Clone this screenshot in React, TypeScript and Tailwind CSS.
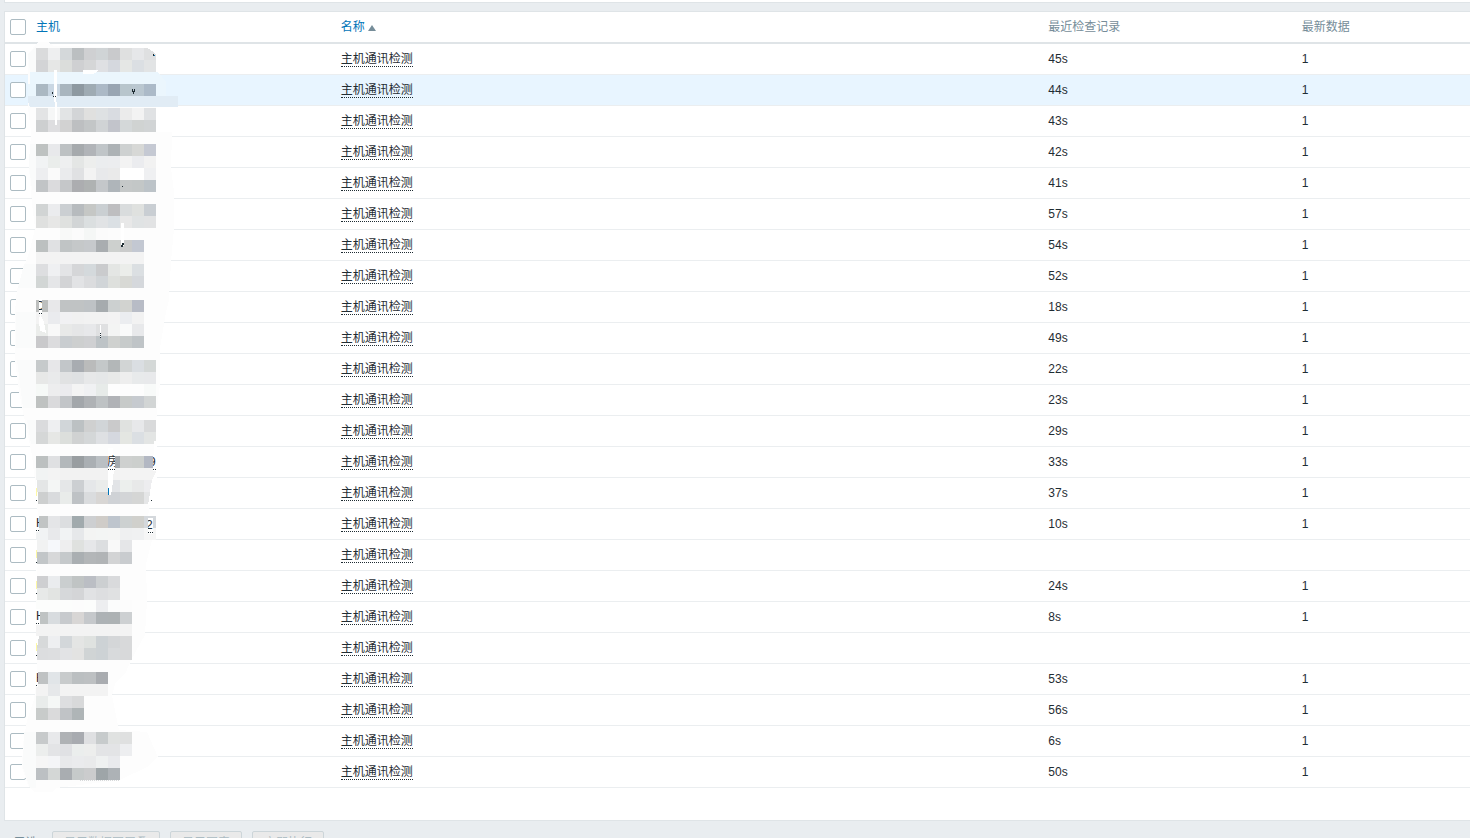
import React, { useState } from 'react';
import { clsx } from 'clsx';

interface Item {
  id: number;
  name: string;
  lastCheck: string;
  lastValue: string;
}

const checks = [
  '45s', '44s', '43s', '42s', '41s', '57s', '54s', '52s', '18s', '49s', '22s', '23s',
  '29s', '33s', '37s', '10s', '', '24s', '8s', '', '53s', '56s', '6s', '50s',
];

const items: Item[] = checks.map((lastCheck, id) => ({
  id,
  name: '主机通讯检测',
  lastCheck,
  lastValue: lastCheck ? '1' : '',
}));

const CELL = 12;

// Each line is one 12px band of the mosaic: top edge, then the cell colours from left to right
const mosaic: [number, string][] = [
  [48, 'dadbdc eeeff0 d4d8da bbbfc1 cfd0d2 d0d4d6 c9cacc dfe0e0 e6e7e9 dfe0e1'],
  [60, 'd3d4d6 e6e7e6 dbdddb cfd0d2 d5d6d7 dfe0e3 d5d8de e5e7e5 dbdfe3 e2e4e5'],
  [84, 'abb8c2 cad7e3 a9b5be 8e99a1 9fabb3 acb9c6 99a5b2 b8c5cc bac7d0 acbac8'],
  [108, 'e3e4e5 f6f7f7 e2e4e5 d3d5d7 e0e0df dee1e3 d9dce1 ebebeb f3f3f3 e0e2e4'],
  [120, 'cdcfd0 dedee0 d2d2d2 bdbfc1 c3c6c7 d0d3d5 c2c4cb d4d8d9 d0d3d2 d1d4d5'],
  [144, 'bec2c1 e8e9eb bdc1c3 a6aaad b1b4b8 c0c5c8 adb2b5 ced1d1 d7d8d6 c5c9d3'],
  [156, 'f1f3f4 eaedeb eeeff0 e4e6e5 edeeed ebedef ecedef f3f3f3 ebecef f2f2f2'],
  [168, 'edeef0 fafafa eaebed e0e1e3 f3f3f3 e8e9eb eaeaea ffffff ffffff eff0f2'],
  [180, 'c1c4c6 dbdbdd c5c7c9 acadb0 afb2b2 c4c7ca afb5ba c5c8c8 c3c7c7 bcc3c8'],
  [204, 'd1d4d4 ebecee cbcfd2 b7bbbe c5c7c5 cacfd2 bebec0 d9dcdd dfe1df c9ced3'],
  [216, 'dfe0df e7e7e6 dfe1df d2d5d6 dbdfe0 e1e3e5 dbe0e4 e8e8e8 e0e3e4 e2e3e4'],
  [228, 'fdfdfd fdfdfd f8f9f8 fbfbfb f5f7f6 fbfbfb fcfcfc fdfdfd fdfdfd'],
  [240, 'bcc0c0 e0e1e3 c0c4c5 c5c8c9 c6c9cc a9adb0 cdd0ce cacbcb c3c8d2'],
  [252, 'f3f3f3 f3f3f3 f3f3f3 f3f3f3 f3f3f3 f3f3f3 f3f3f3 f3f3f3 f3f3f3'],
  [264, 'dddee0 eff0f2 e3e4e6 d5d6d8 d4d9dc cacbcd e4e6e4 ebedea dbdfe2'],
  [276, 'd2d6d5 e5e6e8 d3d4d6 e2e3e5 dbdcde d1d5d8 dee0dd d8d9d5 d5d8dc'],
  [300, 'bdbfbe e8e8ea c0c3c4 c0c3c4 bec2c5 a6abae ccd0d0 d2d3d0 b8bcc6'],
  [312, 'f3f3f3 eaebee f1f1f3 f1f1f1 f2f2f2 f2f2f2 f3f3f3 ebedf0 f2f2f2'],
  [324, 'ebedeb f8f8f8 e8e9e8 e5e6e7 e7e8ea dfe0e1 f3f4f3 f9fafa e8e9eb'],
  [336, 'c9c9cb dcdcde c9cdd0 cdcfcf cfd0d2 bdc3c6 cfd1cf c7cbcb bfc4c7'],
  [360, 'c6cacb e7e7e9 c2c6c9 a8acb1 babbbb c4c8c9 b3b7b8 d2d5d5 dadee2 d4d8d7'],
  [372, 'e7e8e7 e9eaeb e1e2e3 dfe1e3 e7e8e9 e5e7e8 e8e9e8 eeeeee e8eaeb e8e9eb'],
  [384, 'f6f9f7 ededee ebebee f4f4f4 f0f1f3 e7ebe9 fdfdfd fdfdfd fdfdfd f8faf9'],
  [396, 'bfc2c1 dadadc c2c5c8 a3a7ab afb2b5 bec2c4 b0b2b6 c7cac9 c6cacf d2d5d5'],
  [420, 'dadbdd eeeff1 d1d6d9 bcc1c3 cfd0d0 d1d5d8 cacacb e0e2e0 e7e8ea d9dadb'],
  [432, 'd5d7d7 e6e7e5 dcdfdc d0d2d2 d4d7d8 dee0e3 d5d8df e4e6e2 dbdfe3 e3e5e4'],
  [456, 'bcc0c0 dfe0e2 b3b8bb 999ea1 aaafb3 babfc3 a5aaae ced0cf cccfcd b3b8c3'],
  [468, 'f1f3f3 f3f3f3 f2f2f2 f2f2f2 f2f2f2 f2f2f2 f3f3f3 f3f3f3 f3f3f3 f3f3f3'],
  [480, 'e4e6e6 f4f6f5 e5e7e8 cccfd2 e5e7e9 eaeceb e2e4e7 ecefed e8e9e9 ededef'],
  [492, 'cdcfcf d9dbdd e9ecea bec2c5 dadcde d8d6d4 cfd2d6 d3d5d7 d5d6d5 e5e6e7'],
  [516, 'c1c4c4 e4e5e7 dcdee0 a1aaad cdcfd1 cfccc8 bec5cd cdd1d1 d0d0cc d4d8dc'],
  [528, 'f1f3f4 e8e9eb f1f3f4 e6e8ea f3f4f3 f3f5f4 f4f5f4 eff0f1 f0f1f2 f6f6f6'],
  [540, 'f1f2f2 f6f8fb eeeeef dfe1df e6e7e9 dcdee0 f9f9f9 e5e6e8'],
  [552, 'c2c6c8 d7d8d9 c5c9cb aaafb2 b3b6b8 b1b4b6 d3d4d5 c9cccf'],
  [576, 'cecfd1 eaecee cacecf c0c4c4 bbbec4 cccfd1 d9dadc'],
  [588, 'e7e9e8 e2e4e2 d6d8da d4d5d7 e1e2e4 dddee0 e0e1e2'],
  [600, 'fcfdfc fcfdfc fcfdfc fcfcfc fcfdfc edeef0 fbfcfc fcfcfc'],
  [612, 'bfc3c3 d8dcdf c7cacd d8d6d5 c5c8cb adb2b5 adb2b4 cdd0d2'],
  [624, 'f3f3f3 f3f3f3 f3f3f3 f3f3f3 f3f3f3 f3f3f3 f3f3f3 f3f3f3'],
  [636, 'd7d9da eeeff1 d3d7da e4e5e4 dfe2e0 cdd2d5 d4d6d8 d8d9da'],
  [648, 'dcdddf dddee0 e2e3e5 e3e3e2 d0d4d5 cdd2d5 d8dadc d8d9da'],
  [672, 'bfc2c3 e1e5e8 c8cbcc bbbfc1 bdc0c2 a9acb0'],
  [684, 'f3f3f3 e6e8ea f3f3f3 f3f3f3 f3f3f3 f3f3f3'],
  [696, 'e9eceb f5f7f6 dddee0 d8d9da'],
  [708, 'c8cbca dadadb c0c3c6 afb5b7'],
  [732, 'c7cacb e8e9eb afb2b5 a8abb0 dfe0e2 c7cbcc e0e2e1 dfe0e0'],
  [744, 'eceeed e3e4e6 e0e1e4 ebeeed edeeed e3e4e6 e3e4e6 edeef0'],
  [756, 'f6f6f6 f4f5f7 e8e9eb eaebed e9eaeb eff1f1 e9eaed'],
  [768, 'bcc0c3 d4d7d6 a9adb1 c6caca cbcccd 9ea5a8 adb2b6'],
];

// Bits of the host names that stick out of the mosaic
const fragments = [
  { x: 36, y: 516, w: 3, text: 'H', dx: 0 },
  { x: 148, y: 518, w: 5, text: '2', dx: -2 },
  { x: 36, y: 609, w: 4, text: 'H', dx: 0 },
  { x: 36, y: 671, w: 2, text: 'H', dx: 0 },
  { x: 39, y: 299, w: 3, text: 'D', dx: -3 },
  { x: 108, y: 455, w: 7, text: '房', dx: -1 },
  { x: 153, y: 455, w: 3, text: '9', dx: -4 },
];

const yellowMarks = [488, 550, 581, 643];

function HostMosaic() {
  return (
    <svg
      className="absolute top-0 left-0 pointer-events-none"
      width="180"
      height="790"
      viewBox="5 12 180 790"
      shapeRendering="crispEdges"
      aria-hidden="true"
    >
      {/* brush strokes */}
      <path
        fill="#fdfdfd"
        d="M28 54 L38 42 H48 L54 46 L108 47 L150 49 L156 60 V132 H172 L171 168 L174 192 V228 L171 262 L169 300 L166 312 L164 324 L160 348 V384 L157 408 L155 444 L152 490 L148 516 L152 528 V540 L146 564 L147 600 L145 635 L131 660 L126 672 L115 684 L112 696 L117 720 L119 730 L147 732 L158 757 L147 767 L120 780 L56 788 L52 792 H34 L28 785 L22 768 L23 744 L27 720 L34 700 L37 672 V576 L39 540 L38 516 L36 490 L32 456 L27 430 L22 408 L18 384 L15 360 V312 L17 290 L23 270 L30 250 L35 228 L32 204 L29 168 L31 132 L28 108 Z"
      />
      <path fill="#fafbfb" d="M28 54 L36 46 V72 H30 Z M30 144 H36 V190 H32 L29 165 Z M24 264 H36 V288 H18 Z M16 312 H36 V348 H16 Z M17 360 H36 V408 H23 Z M27 420 H36 V444 H31 Z M24 732 H36 V788 H30 L23 768 Z" />
      <path fill="#ebf6fd" d="M30 72 H158 L166 82 V96 H28 V84 H30 Z" />
      <path fill="#e1ecf5" d="M28 96 H178 V107 H30 L28 102 Z" />

      {mosaic.map(([y, colors]) =>
        colors.split(' ').map((color, i) => (
          <rect key={`${y}-${i}`} x={36 + i * CELL} y={y} width={CELL} height={CELL} fill={`#${color}`} />
        ))
      )}

      {/* gaps between the strokes */}
      <path
        fill="#ffffff"
        d="M54 70 H57 V97 H56 L57 107 V125 H55 V108 L54 96 Z M83 70 H98 L96 73 L92 74 H83 Z M121 223 H124 V246 H121 Z M40 314 L44 322 L46 333 L40 331 L39 320 Z M100 325 H101 V338 H100 Z M108 448 H113 L114 469 L112 490 L111 495 H108 Z M146 47 H157 V56 L152 51 Z M154 441 H157 V455 H154 Z M152 480 L157 470 V505 H148 Z M36 480 H37 L38 504 H36 Z M36 540 H37 V600 H36 Z M36 636 H39 L37 648 V662 H36 Z"
      />

      {fragments.map(({ x, y, w, text, dx }) => (
        <svg key={`${x}-${y}`} x={x} y={y} width={w} height="16">
          <rect width={w} height="16" fill="#ffffff" />
          <text x={dx} y="11" fontSize="12" fill="#1f2c33">{text}</text>
          <line x1="0" y1="14.5" x2={w} y2="14.5" stroke="#1f2c33" strokeDasharray="1 1" />
        </svg>
      ))}
      {yellowMarks.map((y) => (
        <g key={y}>
          <rect x="36" y={y} width="1" height="8" fill="#fdf8a4" />
          <rect x="36" y={y + 12} width="1" height="1" fill="#1f2c33" />
        </g>
      ))}
      <path fill="#1f2c33" d="M52 92 H53 V94 H52 Z M53 96 H54 V97 H53 Z M55 96 H56 V97 H55 Z M132 89 H133 V91 H134 V94 H133 V92 H132 Z M134 89 H135 V92 H134 Z M153 54 H154 V55 H155 V56 H153 Z M122 186 H123 V187 H122 Z M122 243 H124 V245 H123 V247 H121 V245 H122 Z M100 333 H101 V334 H100 Z M100 335 H101 V336 H100 Z M100 337 H101 V338 H100 Z M151 500 H152 V501 H151 Z" />
      <path fill="#0275b8" d="M108 488 H109 V495 H108 Z M154 55 H155 V56 H154 Z" />
      <line x1="80" y1="780.5" x2="120" y2="780.5" stroke="#d8dadb" strokeDasharray="1 1" />
    </svg>
  );
}

interface CheckboxProps {
  label: string;
  checked: boolean;
  onChange: () => void;
}

function Checkbox({ label, checked, onChange }: CheckboxProps) {
  return (
    <input
      type="checkbox"
      aria-label={label}
      checked={checked}
      onChange={onChange}
      className="block w-4 h-4 appearance-none rounded-xs border border-[#acbbc2] bg-white checked:bg-[#0275b8]"
    />
  );
}

export default function App() {
  const [selected, setSelected] = useState<number[]>([]);
  const allSelected = selected.length === items.length;

  const toggle = (id: number) =>
    setSelected(selected.includes(id) ? selected.filter((s) => s !== id) : [...selected, id]);

  return (
    <div className="h-screen overflow-hidden bg-[#e9edf0] pl-1 text-xs text-[#1f2c33] font-['Liberation_Sans','Noto_Sans_CJK_SC',sans-serif]">
      {/* Bottom edge of the filter panel */}
      <div className="h-[3px] bg-white border-l border-b border-[#dfe4e7]" />

      <main className="relative mt-2 bg-white border-l border-y border-[#dfe4e7] pb-8">
        <div className="relative">
          <table className="w-full table-fixed border-separate border-spacing-0 text-left">
            <thead>
              <tr className="h-8 [&>th]:border-b-2 [&>th]:border-[#dfe4e7] [&>th]:font-normal [&>th]:px-[5px] [&>th]:py-0">
                <th className="w-[26px]">
                  <Checkbox
                    label="全选"
                    checked={allSelected}
                    onChange={() => setSelected(allSelected ? [] : items.map((i) => i.id))}
                  />
                </th>
                <th className="w-[20.8%]">
                  <a href="#host" className="text-[#0275b8]">主机</a>
                </th>
                <th className="w-[48.3%]">
                  <a href="#name" className="inline-flex items-center gap-[3px] text-[#0275b8]">
                    名称
                    <svg width="8" height="6" viewBox="0 0 8 6" className="mt-[2px]">
                      <path d="M4 0 L8 6 H0 Z" fill="#768d99" />
                    </svg>
                  </a>
                </th>
                <th className="w-[17.3%] text-[#768d99]">最近检查记录</th>
                <th className="text-[#768d99]">最新数据</th>
              </tr>
            </thead>
            <tbody>
              {items.map((item) => (
                <tr
                  key={item.id}
                  className={clsx(
                    'h-[31px] [&>td]:border-b [&>td]:border-[#ebeef0] [&>td]:px-[5px] [&>td]:py-0',
                    item.id === 1 && 'bg-[#e8f5ff]'
                  )}
                >
                  <td>
                    <Checkbox
                      label={item.name}
                      checked={selected.includes(item.id)}
                      onChange={() => toggle(item.id)}
                    />
                  </td>
                  <td />
                  <td>
                    <a href="#item" className="border-b border-dotted border-[#1f2c33]">{item.name}</a>
                  </td>
                  <td>{item.lastCheck}</td>
                  <td>{item.lastValue}</td>
                </tr>
              ))}
            </tbody>
          </table>
          <HostMosaic />
        </div>
      </main>

      {/* Action buttons */}
      <footer className="flex items-center gap-[10px] pt-[10px] pl-[10px]">
        <span className="mr-1 text-[#768d99]">已选</span>
        {['显示数据图层叠', '显示图表', '立即执行'].map((label) => (
          <button
            key={label}
            disabled
            className="h-6 px-[11px] whitespace-nowrap rounded-xs border border-[#ccd5d9] bg-[#eaeaea] text-[#acbbc2]"
          >
            {label}
          </button>
        ))}
      </footer>
    </div>
  );
}
